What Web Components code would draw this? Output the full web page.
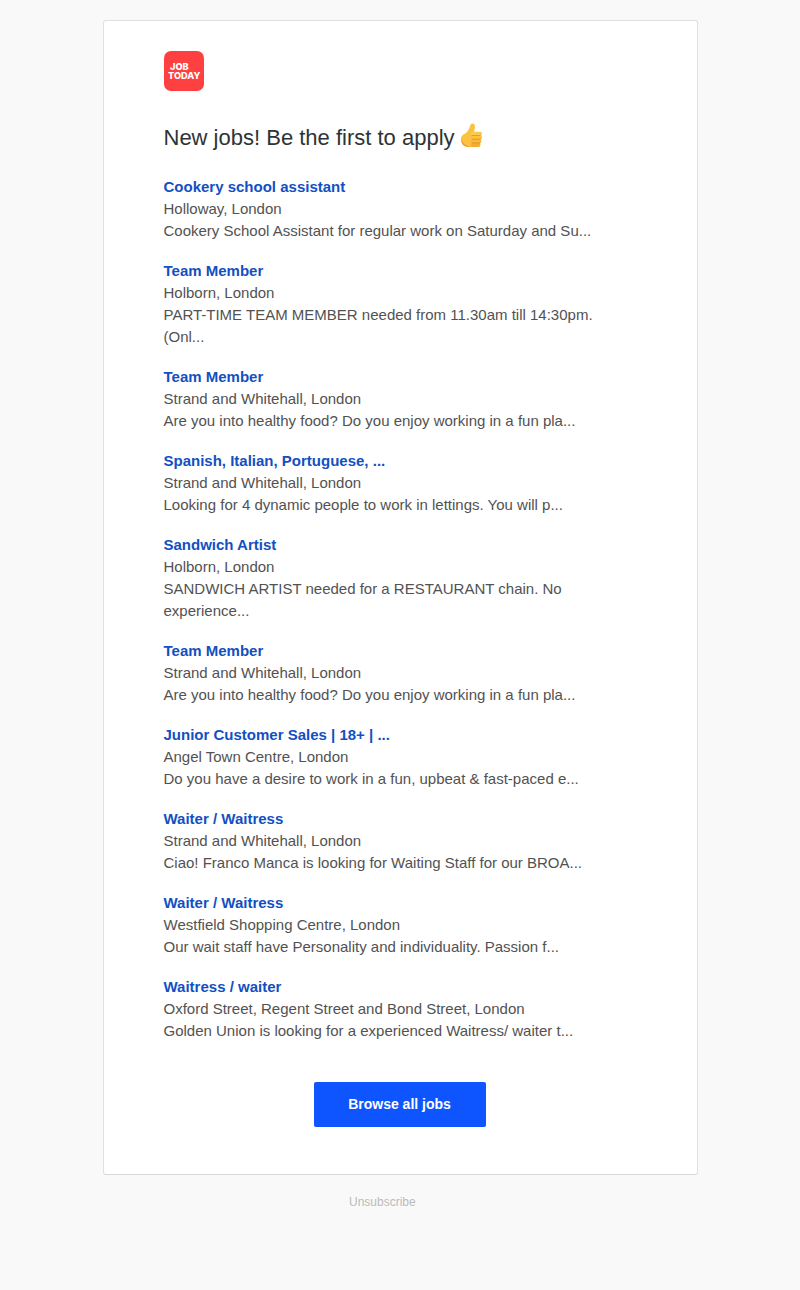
<!DOCTYPE html>
<html>
<head>
<meta charset="utf-8">
<title>New jobs</title>
<style>
  html, body { margin: 0; padding: 0; background: #f9f9f9; }
  body { font-family: "Liberation Sans", Arial, sans-serif; }
</style>
</head>
<body>
<job-email>
  <job-logo slot="logo"></job-logo>
  <job-heading slot="heading">New jobs! Be the first to apply</job-heading>
  <job-item title-text="Cookery school assistant" place="Holloway, London">Cookery School Assistant for regular work on Saturday and Su...</job-item>
  <job-item title-text="Team Member" place="Holborn, London">PART-TIME TEAM MEMBER needed from 11.30am till 14:30pm. (Onl...</job-item>
  <job-item title-text="Team Member" place="Strand and Whitehall, London">Are you into healthy food? Do you enjoy working in a fun pla...</job-item>
  <job-item title-text="Spanish, Italian, Portuguese, ..." place="Strand and Whitehall, London">Looking for 4 dynamic people to work in lettings. You will p...</job-item>
  <job-item title-text="Sandwich Artist" place="Holborn, London">SANDWICH ARTIST needed for a RESTAURANT chain. No experience...</job-item>
  <job-item title-text="Team Member" place="Strand and Whitehall, London">Are you into healthy food? Do you enjoy working in a fun pla...</job-item>
  <job-item title-text="Junior Customer Sales | 18+ | ..." place="Angel Town Centre, London">Do you have a desire to work in a fun, upbeat &amp; fast-paced e...</job-item>
  <job-item title-text="Waiter / Waitress" place="Strand and Whitehall, London">Ciao! Franco Manca is looking for Waiting Staff for our BROA...</job-item>
  <job-item title-text="Waiter / Waitress" place="Westfield Shopping Centre, London">Our wait staff have Personality and individuality. Passion f...</job-item>
  <job-item title-text="Waitress / waiter" place="Oxford Street, Regent Street and Bond Street, London">Golden Union is looking for a experienced Waitress/ waiter t...</job-item>
  <job-button slot="action">Browse all jobs</job-button>
  <span slot="footer">Unsubscribe</span>
</job-email>

<script>
// outer layout: card + footer link
class JobEmail extends HTMLElement {
  constructor() {
    super();
    this.attachShadow({ mode: 'open' });
    this.shadowRoot.innerHTML = `
      <style>
        :host { display: block; height: 1290px; padding-top: 20px; box-sizing: border-box; }
        .card {
          width: 595px; height: 1155px; margin-left: 103px; box-sizing: border-box;
          background: #fff; border: 1px solid #e0e0e0; border-bottom-color: #d8d8d8; border-radius: 3px;
          padding: 30px 60px 0 60px;
          display: flex; flex-direction: column;
        }
        .list { display: flex; flex-direction: column; gap: 18px; width: 440px; margin-top: 21px; margin-left: -0.5px; }
        .action { display: flex; justify-content: center; margin-top: 40px; width: 471px; }
        .footer { margin: 20px 0 0 349px; font-size: 12px; line-height: 14px; color: #bbb; }
      </style>
      <div class="card">
        <slot name="logo"></slot>
        <slot name="heading"></slot>
        <div class="list"><slot></slot></div>
        <div class="action"><slot name="action"></slot></div>
      </div>
      <div class="footer"><slot name="footer"></slot></div>
    `;
  }
}

class JobLogo extends HTMLElement {
  constructor() {
    super();
    this.attachShadow({ mode: 'open' });
    this.shadowRoot.innerHTML = `
      <style>
        :host {
          display: flex; flex-direction: column; justify-content: center;
          width: 40px; height: 40px; box-sizing: border-box; padding: 0 0 1px 4px;
          background: #ff4040; border-radius: 7px; color: #fff;
          font: 800 9.2px/9px Inter, "Liberation Sans", sans-serif;
        }
        .job { padding-left: 2px; }
      </style>
      <span class="job">JOB</span><span>TODAY</span>
    `;
  }
}

class JobHeading extends HTMLElement {
  constructor() {
    super();
    this.attachShadow({ mode: 'open' });
    this.shadowRoot.innerHTML = `
      <style>
        :host {
          display: flex; align-items: center; gap: 5px; margin-top: 30px; height: 34px; margin-left: -0.5px;
          font-size: 22px; line-height: 34px; color: #2d3436;
        }
        svg { width: 22px; height: 25px; margin-top: -6px; }
      </style>
      <span><slot></slot></span>
      <svg viewBox="0 0 22 25" aria-hidden="true">
        <path d="M1 16c0-2.500 1.200-3.800 3-4.700 2.600-1.300 4.300-3.300 5.400-6.300C10 3.200 10.400.5 12.500.5c2 0 2.800 1.900 2.500 4-.2 1.500-.8 3-1 4.500v15h-5C4 24 1 21 1 16z" fill="#fbc13f"/>
        <path d="M1 16c0 5 3 8 8 8h3c-5-.5-9-3-11-8z" fill="#eda12f"/>
        <rect x="11" y="8.700" width="11" height="3.900" rx="1.900" fill="#fcc94f"/>
        <rect x="11" y="12.400" width="11" height="3.900" rx="1.900" fill="#fbc13f"/>
        <rect x="11" y="16.100" width="10.500" height="3.900" rx="1.900" fill="#f9b93a"/>
        <rect x="11" y="19.800" width="9.500" height="4.200" rx="2" fill="#f4ad33"/>
        <path d="M12 12.500h8.500M12 16.200h8.500M12 19.900h8" fill="none" stroke="#dd8f22" stroke-width=".8" stroke-linecap="round"/>
      </svg>
    `;
  }
}

class JobItem extends HTMLElement {
  constructor() {
    super();
    this.attachShadow({ mode: 'open' });
    this.shadowRoot.innerHTML = `
      <style>
        :host { display: block; font-size: 15px; line-height: 22px; color: #525252; }
        .title { color: #1250c2; font-weight: bold; }
      </style>
      <div class="title"></div>
      <div class="place"></div>
      <div><slot></slot></div>
    `;
  }
  connectedCallback() {
    this.shadowRoot.querySelector('.title').textContent = this.getAttribute('title-text');
    this.shadowRoot.querySelector('.place').textContent = this.getAttribute('place');
  }
}

class JobButton extends HTMLElement {
  constructor() {
    super();
    this.attachShadow({ mode: 'open' });
    this.shadowRoot.innerHTML = `
      <style>
        :host {
          display: flex; align-items: center; justify-content: center;
          width: 172px; height: 45px; box-sizing: border-box; padding-bottom: 1px;
          background: #0f55ff; border-radius: 2px;
          color: #fff; font-size: 14px; font-weight: bold;
        }
      </style>
      <slot></slot>
    `;
  }
}

customElements.define('job-email', JobEmail);
customElements.define('job-logo', JobLogo);
customElements.define('job-heading', JobHeading);
customElements.define('job-item', JobItem);
customElements.define('job-button', JobButton);
</script>
</body>
</html>
